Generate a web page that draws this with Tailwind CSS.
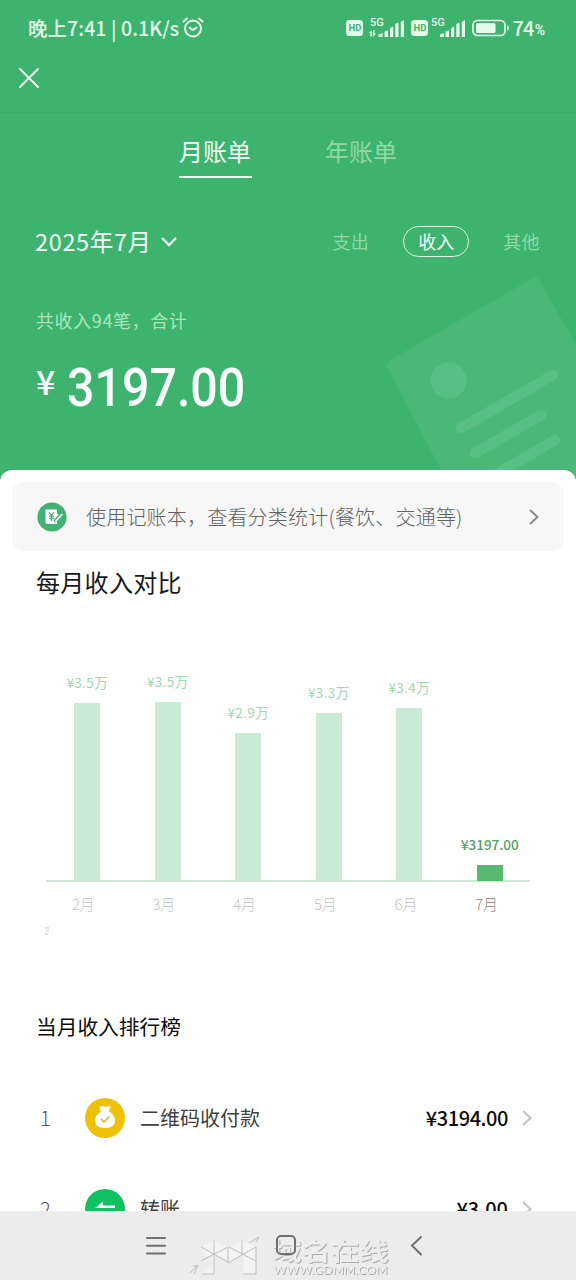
<!DOCTYPE html>
<html lang="zh-CN">
<head>
<meta charset="utf-8">
<title>月账单</title>
<script src="https://cdn.jsdelivr.net/npm/@tailwindcss/browser@4"></script>
</head>
<body class="bg-white">
<div class="relative flex h-[1280px] w-[576px] flex-col overflow-hidden bg-[#3eb370] font-['Noto_Sans_CJK_SC',sans-serif] leading-none whitespace-nowrap">

  <!-- status bar -->
  <div class="flex h-14 items-center justify-between pr-[31px] pl-[28px] text-[#e6fbe9]">
    <div class="flex items-center gap-[3px]">
      <span class="text-[19.5px] font-medium tracking-[0.06px]">晚上7:41 | 0.1K/s</span>
      <svg class="size-[22px]" viewBox="0 0 22 22" fill="none" stroke="currentColor" stroke-width="2" stroke-linecap="round" stroke-linejoin="round"><circle cx="11" cy="11.500" r="8"/><path d="M1.500 4.500 5 1.500M17 1.500l3.500 3M7.500 10.500l3.300 2.600 3.700-2.600"/></svg>
    </div>
    <div class="flex items-center">
      <span class="flex h-4 w-[17px] items-center justify-center rounded-[3.5px] bg-[#e6fbe9] font-['Roboto',sans-serif] text-[9.5px] font-bold text-[#3eb370]">HD</span>
      <svg class="ml-[6px] h-5 w-9 overflow-visible" viewBox="0 0 36 20" fill="currentColor"><text x="1" y="8.300" font-family="Roboto" font-size="11" font-weight="500">5G</text><path d="M0 15 2.900 12v6.500H1.300V15zM4 12h1.500v3.500h1.700L4 18.900zM9.500 16.500l4-1.500v4h-4zM15.600 13.500l3.400-1.200V19h-3.400zM21 10l3.200-1.500V19H21zM26.300 6l3.200-1.500V19h-3.200zM31.800 4l3.200-2v17h-3.200z"/></svg>
      <span class="ml-[6px] flex h-4 w-[17px] items-center justify-center rounded-[3.5px] bg-[#e6fbe9] font-['Roboto',sans-serif] text-[9.5px] font-bold text-[#3eb370]">HD</span>
      <svg class="ml-[3px] h-5 w-9 overflow-visible" viewBox="0 0 36 20" fill="currentColor"><text x="0" y="8.300" font-family="Roboto" font-size="11" font-weight="500">5G</text><path d="M9 16.500l4-1.500v4H9zM14.600 13.500l3.400-1.200V19h-3.400zM20 10l3.200-1.500V19H20zM25.300 6l3.200-1.500V19h-3.200zM30.800 4l3.200-2v17h-3.200z"/></svg>
      <svg class="ml-[5px] h-[18px] w-[38px]" viewBox="0 0 38 18" fill="none"><rect x="1" y="1.500" width="32" height="15" rx="4.500" stroke="currentColor" stroke-width="1.700"/><rect x="4" y="4" width="19.500" height="10" rx="1.500" fill="currentColor"/><path d="M35 6.500q2 .5 2 2.500t-2 2.500z" fill="currentColor"/></svg>
      <span class="ml-[2px] text-[20px] font-medium tracking-[-0.8px]">74</span><span class="pt-[3px] pl-px font-['Roboto',sans-serif] text-[14px] font-medium">%</span>
    </div>
  </div>

  <!-- close button -->
  <div class="flex h-[57px] items-start border-b border-[#3bab6b] pt-[11px] pl-[18px]">
    <svg class="size-[22px]" viewBox="0 0 22 22" fill="none" stroke="#f0fff2" stroke-width="1.900" stroke-linecap="round"><path d="M2 2l18 18M20 2 2 20"/></svg>
  </div>

  <!-- tabs -->
  <div class="flex h-[66px] justify-center gap-[73px] pt-[26px] text-[24px]">
    <div class="h-[39px] w-[73px] border-b-2 border-[#f2fff5] text-center text-[#f2fff5]">月账单</div>
    <div class="w-[73px] text-center text-[#8ed9a6]">年账单</div>
  </div>

  <!-- month and kind -->
  <div class="mt-[42px] flex h-10 items-center justify-between pr-[36px] pl-[35px]">
    <div class="flex items-center gap-[9px] pt-[2px] text-[23.500px] text-[#f0fff3]">
      <span class="tracking-[0.650px]">2025年7月</span>
      <svg class="h-3 w-4" viewBox="0 0 16 12" fill="none" stroke="currentColor" stroke-width="2.300"><path d="m1 2 7 7 7-7"/></svg>
    </div>
    <div class="flex items-center text-[18px] text-[#8ed9a6]">
      <span class="tracking-[0.4px]">支出</span>
      <span class="mx-[34px] flex h-[31px] w-[66px] items-center justify-center rounded-full border border-[#d8f5e0] text-[#f5fff7]">收入</span>
      <span class="tracking-[0.4px]">其他</span>
    </div>
  </div>

  <!-- total -->
  <div class="relative h-[212px] pt-[50px] pl-[36px]">
    <svg class="absolute top-[14px] right-0 h-[200px] w-[190px]" viewBox="386 275 190 200">
      <path d="M389 361 533 278q4-2 6 2l40 70v125H444l-56-106q-3-5 1-8z" fill="#4bb87a"/>
      <circle cx="448.500" cy="380.500" r="18" fill="#58c086"/>
      <path d="m461 428 92-53M475 453l66-38M500 472l55-32" stroke="#58c086" stroke-width="10.500" stroke-linecap="round"/>
    </svg>
    <div class="relative text-[18px] tracking-[0.600px] text-[#a8e6ba]">共收入94笔，合计</div>
    <div class="relative mt-[32px] flex items-start font-medium text-[#f7fffa]">
      <span class="w-[31px] pt-[3px] text-[34px]">¥</span>
      <span class="origin-left scale-x-[0.912] pt-px font-['Roboto',sans-serif] text-[53px]">3197.00</span>
    </div>
  </div>

  <!-- sheet -->
  <div class="relative -mt-[3px] flex h-[810px] shrink-0 flex-col rounded-t-[12px] bg-white">
    <div class="mx-3 mt-3 flex h-[69px] shrink-0 items-center rounded-[12px] bg-[#f7f7f7] pt-px pr-[23px] pl-[25px]">
      <svg class="size-[30px]" viewBox="0 0 30 30"><circle cx="15" cy="15" r="14.600" fill="#43b173"/><path d="M8.500 7.500H20v4l2 1.500-2 3v6H10L8.500 20.500z" fill="#fff"/><path d="m12 10 2.500 3.500L17 10M14.500 13.500V19M12 14.200h5M12 16.400h5" stroke="#43b173" stroke-width="1.200" fill="none"/><path d="m25 11.500-6 6.500-1.500 2" stroke="#43b173" stroke-width="3.300"/><path d="m25.500 12-6 6.500-1 1.500" stroke="#fff" stroke-width="1.700"/></svg>
      <span class="ml-[19px] text-[20px] font-light tracking-[0.2px] text-[#606060]">使用记账本，查看分类统计(餐饮、交通等)</span>
      <svg class="ml-auto h-4 w-[14px]" viewBox="0 0 14 16" fill="none" stroke="#888" stroke-width="1.900"><path d="m3 1 7.500 7L3 15"/></svg>
    </div>
    <h2 class="mt-[19px] pl-[36px] text-[24px] tracking-[0.300px] text-[#1a1a1a]">每月收入对比</h2>

    <!-- chart -->
    <div class="mx-[46px] mt-[78px] h-[210px] border-b-2 border-[#cbead6]">
      <div class="ml-px flex h-[209px] items-end text-[13.500px] tracking-[0.350px] text-[#a0d6b1]">
        <div class="flex flex-1 flex-col items-center gap-[14px]"><span>¥3.5万</span><i class="h-[178px] w-[26px] bg-[#cbead6]"></i></div>
        <div class="flex flex-1 flex-col items-center gap-[14px]"><span>¥3.5万</span><i class="h-[179px] w-[26px] bg-[#cbead6]"></i></div>
        <div class="flex flex-1 flex-col items-center gap-[14px]"><span>¥2.9万</span><i class="h-[148px] w-[26px] bg-[#cbead6]"></i></div>
        <div class="flex flex-1 flex-col items-center gap-[14px]"><span>¥3.3万</span><i class="h-[168px] w-[26px] bg-[#cbead6]"></i></div>
        <div class="flex flex-1 flex-col items-center gap-[14px]"><span>¥3.4万</span><i class="h-[173px] w-[26px] bg-[#cbead6]"></i></div>
        <div class="flex flex-1 flex-col items-center gap-[14px] font-medium tracking-normal text-[#4aa564]"><span>¥3197.00</span><i class="h-[16px] w-[26px] bg-[#55ba6f]"></i></div>
      </div>
    </div>
    <div class="mr-[49px] ml-[43px] mt-[14px] grid grid-cols-6 text-center text-[15px] font-thin text-[#a8a8a8]">
      <span>2月</span><span>3月</span><span>4月</span><span>5月</span><span>6月</span><span class="text-[#444]">7月</span>
    </div>
    <svg class="mt-[16px] ml-[44px] h-2 w-2" viewBox="0 0 8 8" stroke="#aaa" stroke-width=".7"><path d="M1 1h4M2 4h3M1 7h3"/></svg>

    <!-- ranking -->
    <h2 class="mt-[81px] pl-[36px] text-[20.700px] text-[#0d0d0d]">当月收入排行榜</h2>
    <div class="mt-[36px] flex h-[90px] shrink-0 items-center pr-[43px] pl-[40px]">
      <span class="w-[45px] text-[20px] font-light text-[#555]">1</span>
      <svg class="size-10" viewBox="0 0 40 40"><circle cx="20" cy="20" r="20" fill="#edc10a"/><path d="M14 9q3-1.500 6 0 3-1.500 6-.4L23.500 13q6.500 4 6.500 9.500 0 7.500-10 7.500t-10-7.500q0-5.500 6-9z" fill="#fff"/><path d="m16 21 3 3 5.500-5.500" fill="none" stroke="#dfb321" stroke-width="1.500"/></svg>
      <span class="ml-[15px] text-[20px] text-[#404040]">二维码收付款</span>
      <span class="ml-auto text-[20px] font-medium tracking-[-0.450px] text-[#0d0d0d]">¥3194.00</span>
      <svg class="ml-[13px] h-4 w-3" viewBox="0 0 12 16" fill="none" stroke="#c4c4c4" stroke-width="2.200"><path d="m2 1 7.500 7L2 15"/></svg>
    </div>
    <div class="flex h-[90px] shrink-0 items-center pt-[2px] pr-[43px] pl-[40px]">
      <span class="w-[45px] text-[20px] font-light text-[#555]">2</span>
      <svg class="size-10" viewBox="0 0 40 40"><circle cx="20" cy="20" r="20" fill="#0fc160"/><path d="M10 19 18 12.500V16.500h12V19zM30 22l-8 6.500v-4H10V22z" fill="#fff"/></svg>
      <span class="ml-[15px] text-[20px] text-[#404040]">转账</span>
      <span class="ml-auto text-[20px] font-medium text-[#0d0d0d]">¥3.00</span>
      <svg class="ml-[13px] h-4 w-3" viewBox="0 0 12 16" fill="none" stroke="#c4c4c4" stroke-width="2.200"><path d="m2 1 7.500 7L2 15"/></svg>
    </div>
  </div>

  <!-- system navigation, over the scrolled list -->
  <div class="absolute inset-x-0 bottom-0 h-[69px] bg-[#ececec]">
    <svg class="h-[69px] w-[576px]" viewBox="0 1211 576 69" fill="none">
      <path d="M201 1247l13-7 14 7 14-7 14 7v27h-13v-20l-15 9-13-8v19h-14l12-10z" fill="#f3f3f3"/>
      <path d="M201 1247l27 15M228 1247l-27 14M214 1240v34h-12M228 1263l28-16M229 1247l27 14M242 1240v15M256 1247v27h-13M228 1262v-14M249 1243l10-6-3 5M190 1273l8-8-4 9M193 1266h4" stroke="#bdbdbd"/>
      <g class="drop-shadow-[1px_1px_0_#aaa]" fill="#ededed">
        <text x="272.500" y="1259.500" font-family="Noto Sans CJK SC, sans-serif" font-weight="700" font-size="24" textLength="116" lengthAdjust="spacingAndGlyphs">域名在线</text>
        <text x="273.500" y="1274" font-family="Lato, sans-serif" font-size="12" textLength="114" lengthAdjust="spacingAndGlyphs">WWW.GDMM.COM</text>
      </g>
      <g stroke="#707070" stroke-width="2" stroke-linecap="round"><path d="M147 1238h18M147 1245.800h18M147 1253.500h18M421 1237l-9 8.500 9 9"/><rect x="277" y="1236" width="18" height="18" rx="4"/></g>
    </svg>
  </div>
</div>
</body>
</html>
